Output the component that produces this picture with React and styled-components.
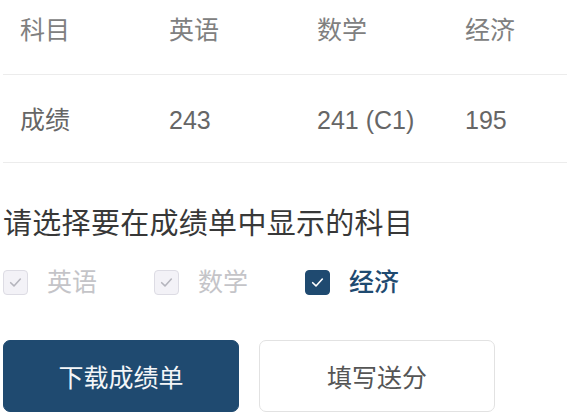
import React, {useState} from 'react'
import styled, {createGlobalStyle} from 'styled-components'

const GlobalStyle = createGlobalStyle`
    body {
        margin: 0;
        background: #fff;
        font-family: "Liberation Sans", "Noto Sans CJK SC", sans-serif;
    }
`

const Page = styled.div`
    width: 575px;
    height: 419px;
    padding: 0 3px;
    box-sizing: border-box;
    overflow: hidden;
`

const Table = styled.div`
    width: 564px;
`

const Row = styled.div`
    display: grid;
    grid-template-columns: 149px 148px 148px 1fr;
    padding: ${props => props.$head ? '18px 0 31px' : '33px 0 29px'};
    border-bottom: 1px solid #ececec;
`

const Cell = styled.div`
    padding-left: 17px;
    font-size: 25px;
    line-height: 25px;
    color: ${props => props.$head ? '#808080' : '#666'};
    white-space: nowrap;
`

const Title = styled.h2`
    margin: 47px 0 0;
    font-size: 29px;
    line-height: 29px;
    font-weight: normal;
    color: #383838;
    letter-spacing: 0.3px;
`

const Options = styled.div`
    display: flex;
    gap: 57px;
    margin-top: 31px;
`

const Option = styled.label`
    display: flex;
    align-items: center;
    gap: 19px;
    font-size: 25px;
    line-height: 25px;
    cursor: ${props => props.$disabled ? 'default' : 'pointer'};
    font-weight: ${props => !props.$disabled && props.$checked ? 500 : 'normal'};
    color: ${props => props.$disabled ? '#c4c4c8' : props.$checked ? '#1f4a70' : '#555'};
`

const Box = styled.span`
    display: flex;
    align-items: center;
    justify-content: center;
    width: 25px;
    height: 25px;
    box-sizing: border-box;
    border-radius: 4px;
    background: ${props => props.$disabled ? '#f3f2f7' : props.$checked ? '#1f4a70' : '#fff'};
    border: 1px solid ${props => props.$disabled ? '#dddce4' : '#1f4a70'};
    & svg path {
        stroke: ${props => props.$disabled ? '#b5b5bd' : '#fff'};
    }
`

const Buttons = styled.div`
    display: flex;
    gap: 20px;
    margin-top: 45px;
`

const Button = styled.button`
    width: 236px;
    height: 72px;
    border-radius: 7px;
    font-family: inherit;
    font-size: 25px;
    cursor: pointer;
    box-sizing: border-box;
    background: ${props => props.$primary ? '#1f4a70' : '#fff'};
    color: ${props => props.$primary ? '#f4f6f8' : '#555'};
    border: 1px solid ${props => props.$primary ? '#1f4a70' : '#e2e2e2'};
`

const subjects = ['英语', '数学', '经济']
const scores = ['243', '241 (C1)', '195']

const Check = () => (
    <svg width="15" height="15" viewBox="0 0 14 14" fill="none">
        <path d="M2.5 7.2 L5.6 10.2 L11.5 3.8" strokeWidth="1.5" strokeLinecap="round" strokeLinejoin="round" />
    </svg>
)

export default function App() {
    const [picked, setPicked] = useState({经济: true})
    const disabled = {英语: true, 数学: true}
    return (
        <Page>
            <GlobalStyle />
            <Table>
                <Row $head>
                    <Cell $head>科目</Cell>
                    {subjects.map(s => <Cell $head key={s}>{s}</Cell>)}
                </Row>
                <Row>
                    <Cell>成绩</Cell>
                    {scores.map(s => <Cell key={s}>{s}</Cell>)}
                </Row>
            </Table>
            <Title>请选择要在成绩单中显示的科目</Title>
            <Options>
                {subjects.map(s => {
                    const isOff = !!disabled[s]
                    const isOn = isOff || !!picked[s]
                    return (
                        <Option
                          key={s}
                          $disabled={isOff}
                          $checked={isOn}
                          onClick={() => !isOff && setPicked({...picked, [s]: !picked[s]})}
                        >
                            <Box $disabled={isOff} $checked={isOn}>{isOn && <Check />}</Box>
                            {s}
                        </Option>
                    )
                })}
            </Options>
            <Buttons>
                <Button $primary>下载成绩单</Button>
                <Button>填写送分</Button>
            </Buttons>
        </Page>
    )
}
